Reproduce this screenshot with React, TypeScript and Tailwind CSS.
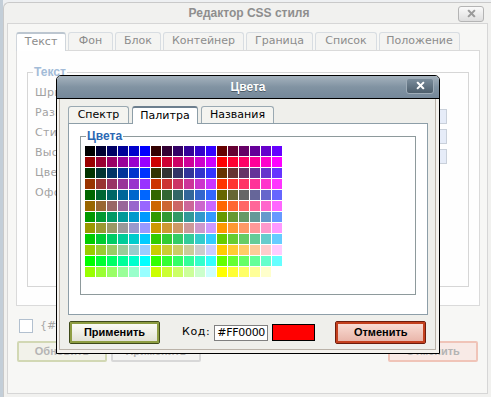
import React from "react";

const STEPS = ["00", "33", "66", "99", "CC", "FF"];

// web-safe palette, 18 x 12, the way the old editor laid it out
function paletteColors() {
  const out: string[] = [];
  for (let r = 0; r < 12; r++) {
    const g = STEPS[Math.floor(r / 2)];
    const reds = r % 2 ? STEPS.slice(3) : STEPS.slice(0, 3);
    for (let c = 0; c < 18; c++) {
      out.push("#" + reds[Math.floor(c / 6)] + g + STEPS[c % 6]);
    }
  }
  return out;
}

const outerTabs = [
  { label: "Текст", w: "w-[50px]", active: true },
  { label: "Фон", w: "w-[45px]" },
  { label: "Блок", w: "w-[46px]" },
  { label: "Контейнер", w: "w-[81px]" },
  { label: "Граница", w: "w-[67px]" },
  { label: "Список", w: "w-[62px]" },
  { label: "Положение", w: "w-[81px]" },
];

const innerTabs = [
  { label: "Спектр", w: "w-[61px]" },
  { label: "Палитра", w: "w-[66px]", active: true },
  { label: "Названия", w: "w-[73px]" },
];

const labels = ["Шрифт", "Размер", "Стиль", "Высота", "Цвет", "Оформление"];

function CloseX({ className }: { className?: string }) {
  return (
    <svg viewBox="0 0 10 10" className={className}>
      <path d="M2 2 L8 8 M8 2 L2 8" stroke="currentColor" strokeWidth="2.2" strokeLinecap="square" />
    </svg>
  );
}

export default function App() {
  const colors = paletteColors();
  return (
    <div className="relative w-[491px] h-[397px] overflow-hidden bg-[#eef0f2] flex font-['DejaVu_Sans',sans-serif]">
      <div className="w-[3px] bg-[#c3ced8]" />

      {/* outer editor dialog, faded behind the modal */}
      <div className="mt-[2px] flex-1 h-[395px] rounded-tl-[6px] border-l border-t border-[#c9c9c9] bg-[#f1f1ef] flex flex-col">
        <div className="h-[20px] grid grid-cols-[1fr_auto_1fr] items-center">
          <div />
          <div className="font-['Liberation_Sans',Arial,sans-serif] font-bold text-[12px] text-[#8e8e8e] ml-[3px]">
            Редактор CSS стиля
          </div>
          <div className="flex justify-end pr-[7px]">
            <div className="w-[26px] h-[16px] mt-[1px] rounded-[3px] border border-[#b4b4b4] bg-linear-to-b from-[#fafafa] to-[#dedede] flex items-center justify-center text-[#9a9a9a]">
              <CloseX className="w-[9px] h-[9px]" />
            </div>
          </div>
        </div>

        <div className="ml-[3px] w-[481px] h-[371px] border border-[#d6d6d6] bg-[#f7f7f5] pt-[8px] flex flex-col">
          <div className="ml-[8px] flex items-end gap-[2px] h-[18px]">
            {outerTabs.map((t) => (
              <div
                key={t.label}
                className={
                  t.active
                    ? `${t.w} h-[19px] -mb-px relative z-10 rounded-t-[3px] border border-b-0 border-t-2 border-[#d0d6dc] border-t-[#bcc6d0] bg-white flex items-center justify-center text-[11px] text-[#8c8c8c]`
                    : `${t.w} h-[18px] rounded-t-[3px] border border-b-0 border-[#d8dde2] bg-[#f4f4f2] flex items-center justify-center text-[11px] text-[#8c8c8c]`
                }
              >
                {t.label}
              </div>
            ))}
          </div>

          <div className="ml-[8px] w-[464px] h-[256px] border border-[#dadada] bg-[#fefefe] pl-[10px] pt-[14px]">
            <fieldset className="w-[442px] h-[222px] border border-[#d6d6d6]">
              <legend className="ml-[5px] px-[1px] font-['Liberation_Sans',Arial,sans-serif] font-bold text-[12px] leading-[14px] text-[#a3bcd8]">
                Текст
              </legend>
              <div className="flex flex-col gap-[6px] pt-[7px] pl-[7px]">
                {labels.map((l, i) => (
                  <div key={l} className="h-[14px] flex items-center justify-between pr-[21px]">
                    <span className="text-[11px] leading-[14px] text-[#a2a2a2] tracking-[0.3px]">{l}</span>
                    {i >= 1 && i <= 3 && (
                      <span className="w-[8px] h-[15px] border border-[#c9d0da] bg-[#e6ecf8] -mb-[6px]" />
                    )}
                  </div>
                ))}
              </div>
            </fieldset>
          </div>

          <div className="mt-[13px] ml-[11px] flex items-center gap-[7px] h-[14px]">
            <span className="w-[14px] h-[14px] border border-[#b2c0cf] bg-white" />
            <span className="text-[11px] text-[#a8a8a8]">{"{#"}</span>
          </div>

          <div className="mt-[8px] ml-[9px] flex items-start font-['Liberation_Sans',Arial,sans-serif] font-bold text-[11px] text-[#b4b4b4]">
            <div className="w-[90px] h-[21px] rounded-[2px] border-2 border-[#d2d8b4] bg-[#f2f2ea] flex items-center justify-center">
              Обновить
            </div>
            <div className="ml-[4px] w-[90px] h-[21px] rounded-[2px] border-2 border-[#d8d8d8] bg-[#f4f4f2] flex items-center justify-center">
              Применить
            </div>
            <div className="ml-auto mr-[9px] w-[90px] h-[21px] rounded-[2px] border-2 border-[#f0c4b8] bg-[#f8eae6] flex items-center justify-center">
              Отменить
            </div>
          </div>
        </div>
      </div>

      {/* colour picker modal */}
      <div className="absolute left-[56px] top-[75px] w-[384px] h-[279px] rounded-t-[5px] border border-black bg-[#f4f2ee] flex flex-col overflow-hidden">
        <div className="h-[23px] shrink-0 border-b border-black bg-linear-to-b from-[#a6b3be] via-[#8193a2] to-[#75889a] grid grid-cols-[1fr_auto_1fr] items-center">
          <div />
          <div className="font-['Liberation_Sans',Arial,sans-serif] font-bold text-[12px] text-white [text-shadow:0_1px_0_#4c5b68]">
            Цвета
          </div>
          <div className="flex justify-end pr-[5px]">
            <div className="w-[28px] h-[16px] mb-[3px] rounded-[3px] border border-[#9eacb8] bg-linear-to-b from-[#7a8c9b] to-[#4e5f6d] flex items-center justify-center text-white">
              <CloseX className="w-[9px] h-[9px]" />
            </div>
          </div>
        </div>

        <div className="flex-1 pl-[2px] pr-[3px] pb-[3px]">
          <div className="h-full border border-t-0 border-[#bab2a8] bg-[#efefeb] pl-[8px] pt-[7px] flex flex-col">
            <div className="flex items-end gap-[3px] h-[17px] font-['DejaVu_Sans',sans-serif] text-[11px] text-black">
              {innerTabs.map((t) => (
                <div
                  key={t.label}
                  className={
                    t.active
                      ? `${t.w} h-[18px] -mb-px relative z-10 rounded-t-[3px] border border-b-0 border-t-2 border-[#8d9ea8] border-t-[#6d7f8e] bg-white flex items-center justify-center`
                      : `${t.w} h-[17px] rounded-t-[3px] border border-b-0 border-[#9aa9b2] bg-[#f4f4f0] flex items-center justify-center`
                  }
                >
                  {t.label}
                </div>
              ))}
            </div>

            <div className="w-[360px] h-[192px] border border-[#8d9ea8] bg-white pl-[11px] pt-[5px]">
              <fieldset className="w-[336px] h-[166px] border border-[#8e9a9c]">
                <legend className="ml-[5px] px-[1px] font-['Liberation_Sans',Arial,sans-serif] font-bold text-[12px] leading-[14px] text-[#2b68b3]">
                  Цвета
                </legend>
                <div className="mt-[3px] ml-[4px] grid grid-cols-[repeat(18,10px)] gap-px">
                  {colors.map((c, i) => (
                    <div key={i} className="w-[10px] h-[10px]" style={{ backgroundColor: c }} />
                  ))}
                </div>
              </fieldset>
            </div>

            <div className="mt-[6px] flex items-center h-[23px]">
              <div className="ml-[1px] w-[91px] h-[23px] border border-[#3f4a1a] rounded-[2px]">
                <div className="h-full border-2 border-[#8e9d42] bg-linear-to-b from-[#fbfbf6] to-[#e2e2d6] flex items-center justify-center font-['Liberation_Sans',Arial,sans-serif] font-bold text-[11px] text-black">
                  Применить
                </div>
              </div>
              <span className="ml-[22px] text-[11px] text-black tracking-[0.6px]">Код:</span>
              <div className="ml-[4px] w-[54px] h-[16px] border border-[#808080] bg-white flex items-center pl-[2px] text-[11px] leading-none text-black tracking-[-0.3px]">
                #FF0000
              </div>
              <div className="ml-[4px] w-[43px] h-[17px] border border-black bg-[#ff0000]" />
              <div className="ml-[20px] w-[91px] h-[23px] border border-[#6e1c0c] rounded-[2px]">
                <div className="h-full border-2 border-[#c4401e] bg-linear-to-b from-[#f9dcd4] to-[#e9b6aa] flex items-center justify-center font-['Liberation_Sans',Arial,sans-serif] font-bold text-[11px] text-black">
                  Отменить
                </div>
              </div>
            </div>
          </div>
        </div>
      </div>
    </div>
  );
}
